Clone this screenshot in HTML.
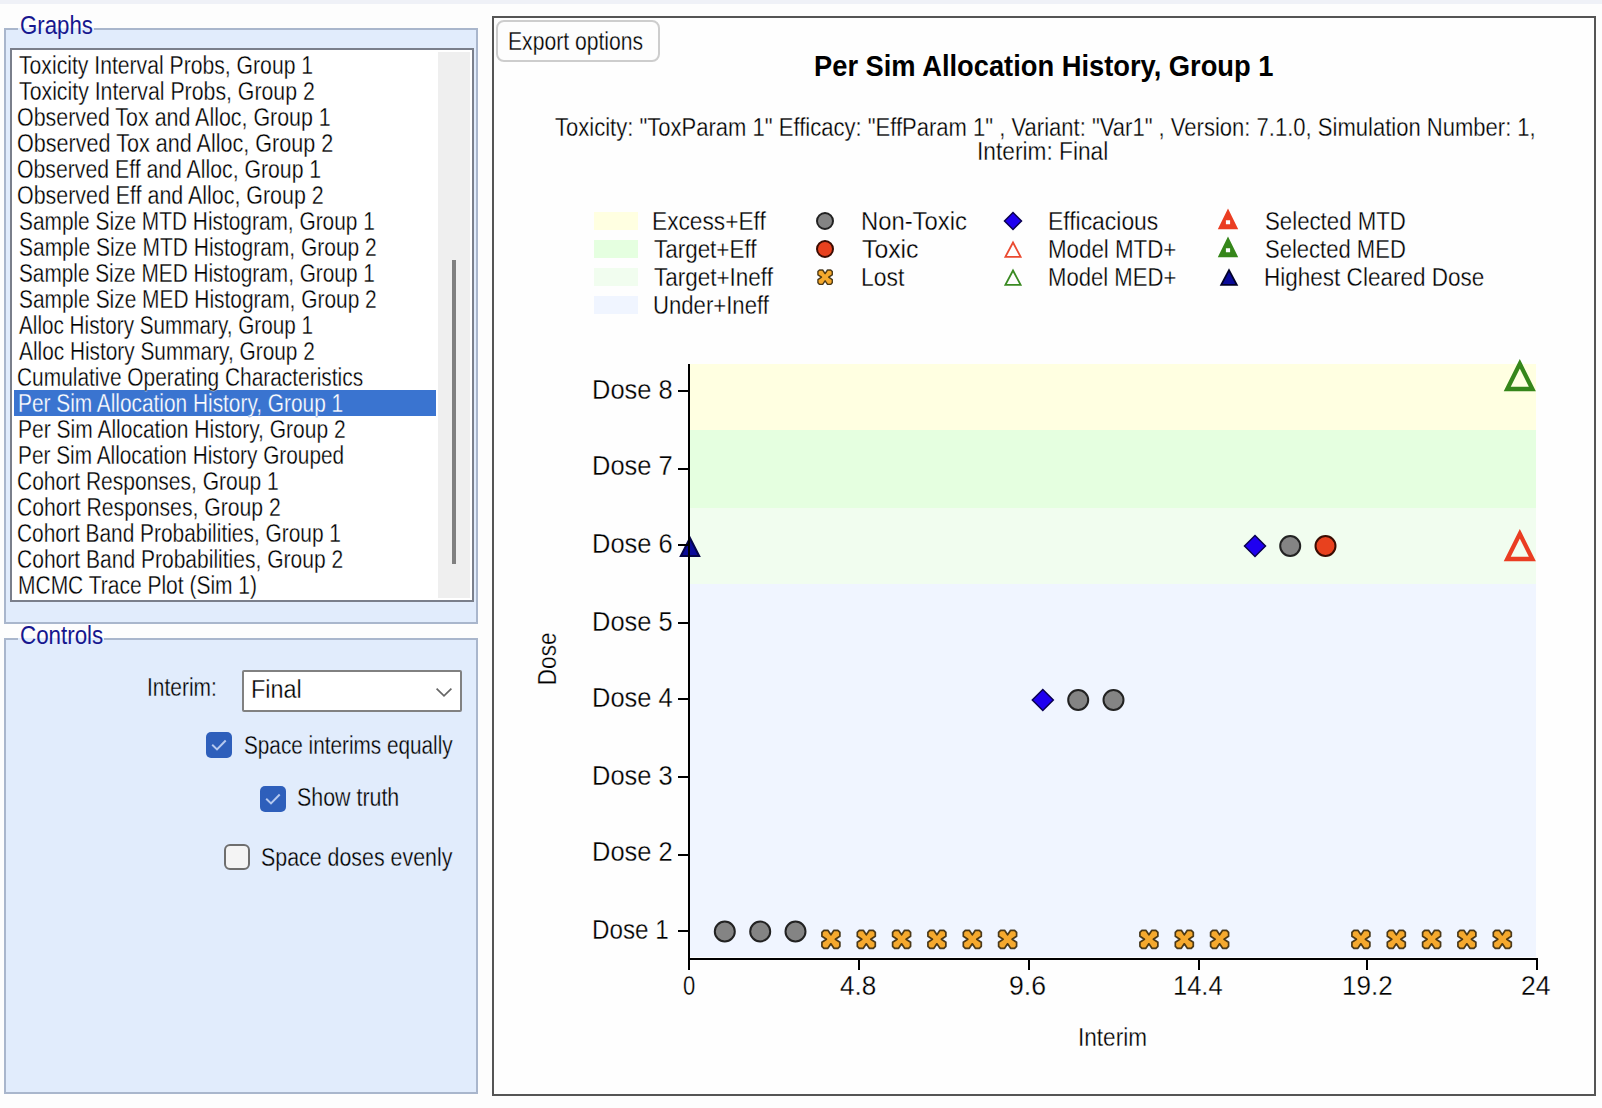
<!DOCTYPE html>
<html><head><meta charset="utf-8"><title>Per Sim Allocation History</title>
<style>
html,body{margin:0;padding:0;}
body{width:1602px;height:1108px;position:relative;overflow:hidden;background:#fdfdfd;font-family:"Liberation Sans",sans-serif;}
.a{position:absolute;box-sizing:border-box;}
.t{position:absolute;white-space:pre;line-height:1;transform-origin:0 0;font-family:"Liberation Sans",sans-serif;}
.strip{left:0;top:0;width:1602px;height:4px;background:#eff1f7;}
.grp{border:2px solid #a9b6cc;background:#e1ecfc;}
.gap{background:#e1ecfc;height:2px;}
.gapw{background:#fdfdfd;}
.list{left:10px;top:48px;width:464px;height:554px;border:2px solid #7a7f8b;background:#fff;}
.track{left:438px;top:52px;width:32px;height:546px;background:#efefef;}
.thumb{left:452px;top:260px;width:4px;height:304px;background:#808080;}
.sel{left:14px;top:390px;width:422px;height:26px;background:#3a74d0;}
.combo{left:242px;top:670px;width:220px;height:42px;border:2px solid #818181;border-radius:2px;background:#fff;}
.cb{width:26px;height:26px;border-radius:5px;background:#2e5fbb;}
.cbu{width:26px;height:26px;border-radius:6px;background:#f4f4f4;border:2px solid #6e6e6e;}
.panel{left:492px;top:16px;width:1104px;height:1080px;border:2px solid #555;background:#fefefe;}
.btn{left:496px;top:20px;width:164px;height:42px;border:2px solid #cdcdcd;border-radius:8px;background:#fdfdfd;}
svg{position:absolute;left:0;top:0;}

</style></head>
<body>
<div class="a strip"></div>

<!-- Graphs group -->
<div class="a grp" style="left:4px;top:28px;width:474px;height:596px;"></div>
<div class="a gapw" style="left:18px;top:12px;width:76px;height:16px;"></div>
<div class="a gap" style="left:18px;top:28px;width:76px;"></div>
<div class="a list"></div>
<div class="a track"></div>
<div class="a thumb"></div>
<div class="a sel"></div>

<!-- Controls group -->
<div class="a grp" style="left:4px;top:638px;width:474px;height:456px;"></div>
<div class="a gapw" style="left:18px;top:624px;width:86px;height:14px;"></div>
<div class="a gap" style="left:18px;top:638px;width:86px;"></div>
<div class="a combo"></div>
<div class="a cb" style="left:206px;top:732px;"></div>
<div class="a cb" style="left:260px;top:786px;"></div>
<div class="a cbu" style="left:224px;top:844px;"></div>

<!-- Chart panel -->
<div class="a panel"></div>
<div class="a btn"></div>

<svg width="1602" height="1108" viewBox="0 0 1602 1108">
<rect x="690" y="364" width="846" height="66" fill="#ffffe1"/>
<rect x="690" y="430" width="846" height="78" fill="#e5ffe0"/>
<rect x="690" y="508" width="846" height="76" fill="#f1fdef"/>
<rect x="690" y="584" width="846" height="373" fill="#f0f5ff"/>
<circle cx="724.8" cy="931.5" r="10.0" fill="#848484" stroke="#222" stroke-width="2"/>
<circle cx="760.2" cy="931.5" r="10.0" fill="#848484" stroke="#222" stroke-width="2"/>
<circle cx="795.5" cy="931.5" r="10.0" fill="#848484" stroke="#222" stroke-width="2"/>
<path d="M823.9 930.3 L827.9 930.3 L830.9 934.8 L833.9 930.3 L837.9 930.3 L839.9 932.3 L839.9 936.3 L835.4 939.3 L839.9 942.3 L839.9 946.3 L837.9 948.3 L833.9 948.3 L830.9 943.8 L827.9 948.3 L823.9 948.3 L821.9 946.3 L821.9 942.3 L826.4 939.3 L821.9 936.3 L821.9 932.3Z" fill="#f5a92e" stroke="#2e2004" stroke-width="1.7" stroke-linejoin="round" stroke-opacity="0.85"/>
<path d="M859.3 930.3 L863.3 930.3 L866.3 934.8 L869.3 930.3 L873.3 930.3 L875.3 932.3 L875.3 936.3 L870.8 939.3 L875.3 942.3 L875.3 946.3 L873.3 948.3 L869.3 948.3 L866.3 943.8 L863.3 948.3 L859.3 948.3 L857.3 946.3 L857.3 942.3 L861.8 939.3 L857.3 936.3 L857.3 932.3Z" fill="#f5a92e" stroke="#2e2004" stroke-width="1.7" stroke-linejoin="round" stroke-opacity="0.85"/>
<path d="M894.6 930.3 L898.6 930.3 L901.6 934.8 L904.6 930.3 L908.6 930.3 L910.6 932.3 L910.6 936.3 L906.1 939.3 L910.6 942.3 L910.6 946.3 L908.6 948.3 L904.6 948.3 L901.6 943.8 L898.6 948.3 L894.6 948.3 L892.6 946.3 L892.6 942.3 L897.1 939.3 L892.6 936.3 L892.6 932.3Z" fill="#f5a92e" stroke="#2e2004" stroke-width="1.7" stroke-linejoin="round" stroke-opacity="0.85"/>
<path d="M929.9 930.3 L933.9 930.3 L936.9 934.8 L939.9 930.3 L943.9 930.3 L945.9 932.3 L945.9 936.3 L941.4 939.3 L945.9 942.3 L945.9 946.3 L943.9 948.3 L939.9 948.3 L936.9 943.8 L933.9 948.3 L929.9 948.3 L927.9 946.3 L927.9 942.3 L932.4 939.3 L927.9 936.3 L927.9 932.3Z" fill="#f5a92e" stroke="#2e2004" stroke-width="1.7" stroke-linejoin="round" stroke-opacity="0.85"/>
<path d="M965.3 930.3 L969.3 930.3 L972.3 934.8 L975.3 930.3 L979.3 930.3 L981.3 932.3 L981.3 936.3 L976.8 939.3 L981.3 942.3 L981.3 946.3 L979.3 948.3 L975.3 948.3 L972.3 943.8 L969.3 948.3 L965.3 948.3 L963.3 946.3 L963.3 942.3 L967.8 939.3 L963.3 936.3 L963.3 932.3Z" fill="#f5a92e" stroke="#2e2004" stroke-width="1.7" stroke-linejoin="round" stroke-opacity="0.85"/>
<path d="M1000.6 930.3 L1004.6 930.3 L1007.6 934.8 L1010.6 930.3 L1014.6 930.3 L1016.6 932.3 L1016.6 936.3 L1012.1 939.3 L1016.6 942.3 L1016.6 946.3 L1014.6 948.3 L1010.6 948.3 L1007.6 943.8 L1004.6 948.3 L1000.6 948.3 L998.6 946.3 L998.6 942.3 L1003.1 939.3 L998.6 936.3 L998.6 932.3Z" fill="#f5a92e" stroke="#2e2004" stroke-width="1.7" stroke-linejoin="round" stroke-opacity="0.85"/>
<path d="M1141.9 930.3 L1145.9 930.3 L1148.9 934.8 L1151.9 930.3 L1155.9 930.3 L1157.9 932.3 L1157.9 936.3 L1153.4 939.3 L1157.9 942.3 L1157.9 946.3 L1155.9 948.3 L1151.9 948.3 L1148.9 943.8 L1145.9 948.3 L1141.9 948.3 L1139.9 946.3 L1139.9 942.3 L1144.4 939.3 L1139.9 936.3 L1139.9 932.3Z" fill="#f5a92e" stroke="#2e2004" stroke-width="1.7" stroke-linejoin="round" stroke-opacity="0.85"/>
<path d="M1177.3 930.3 L1181.3 930.3 L1184.3 934.8 L1187.3 930.3 L1191.3 930.3 L1193.3 932.3 L1193.3 936.3 L1188.8 939.3 L1193.3 942.3 L1193.3 946.3 L1191.3 948.3 L1187.3 948.3 L1184.3 943.8 L1181.3 948.3 L1177.3 948.3 L1175.3 946.3 L1175.3 942.3 L1179.8 939.3 L1175.3 936.3 L1175.3 932.3Z" fill="#f5a92e" stroke="#2e2004" stroke-width="1.7" stroke-linejoin="round" stroke-opacity="0.85"/>
<path d="M1212.6 930.3 L1216.6 930.3 L1219.6 934.8 L1222.6 930.3 L1226.6 930.3 L1228.6 932.3 L1228.6 936.3 L1224.1 939.3 L1228.6 942.3 L1228.6 946.3 L1226.6 948.3 L1222.6 948.3 L1219.6 943.8 L1216.6 948.3 L1212.6 948.3 L1210.6 946.3 L1210.6 942.3 L1215.1 939.3 L1210.6 936.3 L1210.6 932.3Z" fill="#f5a92e" stroke="#2e2004" stroke-width="1.7" stroke-linejoin="round" stroke-opacity="0.85"/>
<path d="M1353.9 930.3 L1357.9 930.3 L1360.9 934.8 L1363.9 930.3 L1367.9 930.3 L1369.9 932.3 L1369.9 936.3 L1365.4 939.3 L1369.9 942.3 L1369.9 946.3 L1367.9 948.3 L1363.9 948.3 L1360.9 943.8 L1357.9 948.3 L1353.9 948.3 L1351.9 946.3 L1351.9 942.3 L1356.4 939.3 L1351.9 936.3 L1351.9 932.3Z" fill="#f5a92e" stroke="#2e2004" stroke-width="1.7" stroke-linejoin="round" stroke-opacity="0.85"/>
<path d="M1389.3 930.3 L1393.3 930.3 L1396.3 934.8 L1399.3 930.3 L1403.3 930.3 L1405.3 932.3 L1405.3 936.3 L1400.8 939.3 L1405.3 942.3 L1405.3 946.3 L1403.3 948.3 L1399.3 948.3 L1396.3 943.8 L1393.3 948.3 L1389.3 948.3 L1387.3 946.3 L1387.3 942.3 L1391.8 939.3 L1387.3 936.3 L1387.3 932.3Z" fill="#f5a92e" stroke="#2e2004" stroke-width="1.7" stroke-linejoin="round" stroke-opacity="0.85"/>
<path d="M1424.6 930.3 L1428.6 930.3 L1431.6 934.8 L1434.6 930.3 L1438.6 930.3 L1440.6 932.3 L1440.6 936.3 L1436.1 939.3 L1440.6 942.3 L1440.6 946.3 L1438.6 948.3 L1434.6 948.3 L1431.6 943.8 L1428.6 948.3 L1424.6 948.3 L1422.6 946.3 L1422.6 942.3 L1427.1 939.3 L1422.6 936.3 L1422.6 932.3Z" fill="#f5a92e" stroke="#2e2004" stroke-width="1.7" stroke-linejoin="round" stroke-opacity="0.85"/>
<path d="M1459.9 930.3 L1463.9 930.3 L1466.9 934.8 L1469.9 930.3 L1473.9 930.3 L1475.9 932.3 L1475.9 936.3 L1471.4 939.3 L1475.9 942.3 L1475.9 946.3 L1473.9 948.3 L1469.9 948.3 L1466.9 943.8 L1463.9 948.3 L1459.9 948.3 L1457.9 946.3 L1457.9 942.3 L1462.4 939.3 L1457.9 936.3 L1457.9 932.3Z" fill="#f5a92e" stroke="#2e2004" stroke-width="1.7" stroke-linejoin="round" stroke-opacity="0.85"/>
<path d="M1495.3 930.3 L1499.3 930.3 L1502.3 934.8 L1505.3 930.3 L1509.3 930.3 L1511.3 932.3 L1511.3 936.3 L1506.8 939.3 L1511.3 942.3 L1511.3 946.3 L1509.3 948.3 L1505.3 948.3 L1502.3 943.8 L1499.3 948.3 L1495.3 948.3 L1493.3 946.3 L1493.3 942.3 L1497.8 939.3 L1493.3 936.3 L1493.3 932.3Z" fill="#f5a92e" stroke="#2e2004" stroke-width="1.7" stroke-linejoin="round" stroke-opacity="0.85"/>
<path d="M1042.8 689.5 L1053.3 700.0 L1042.8 710.5 L1032.3 700.0Z" fill="#1f00f0" stroke="#0a0050" stroke-width="1.5" stroke-linejoin="miter"/>
<circle cx="1078.2" cy="700.0" r="10.0" fill="#848484" stroke="#222" stroke-width="2"/>
<circle cx="1113.5" cy="700.0" r="10.0" fill="#848484" stroke="#222" stroke-width="2"/>
<path d="M1255.0 535.5 L1265.5 546.0 L1255.0 556.5 L1244.5 546.0Z" fill="#1f00f0" stroke="#0a0050" stroke-width="1.5" stroke-linejoin="miter"/>
<circle cx="1290.2" cy="546.0" r="10.0" fill="#848484" stroke="#222" stroke-width="2"/>
<circle cx="1325.5" cy="546.0" r="10.0" fill="#e8411e" stroke="#3a0c02" stroke-width="2"/>
<path d="M1519.8 363.8 L1532.4 389.0 L1507.2 389.0Z" fill="none" stroke="#35861a" stroke-width="4.3" stroke-linejoin="miter"/>
<path d="M1519.8 533.8 L1532.4 559.0 L1507.2 559.0Z" fill="none" stroke="#ea3d22" stroke-width="4.3" stroke-linejoin="miter"/>
<path d="M690.0 538.0 L699.2 556.0 L680.8 556.0Z" fill="#0b0b9a" stroke="#05054a" stroke-width="2" stroke-linejoin="miter"/>
<rect x="688" y="364" width="2" height="606" fill="#000"/>
<rect x="688" y="958" width="850" height="2" fill="#000"/>
<rect x="678" y="390" width="10" height="2" fill="#000"/>
<rect x="678" y="468" width="10" height="2" fill="#000"/>
<rect x="678" y="544" width="10" height="2" fill="#000"/>
<rect x="678" y="622" width="10" height="2" fill="#000"/>
<rect x="678" y="698" width="10" height="2" fill="#000"/>
<rect x="678" y="776" width="10" height="2" fill="#000"/>
<rect x="678" y="854" width="10" height="2" fill="#000"/>
<rect x="678" y="930" width="10" height="2" fill="#000"/>
<rect x="858" y="960" width="2" height="10" fill="#000"/>
<rect x="1028" y="960" width="2" height="10" fill="#000"/>
<rect x="1198" y="960" width="2" height="10" fill="#000"/>
<rect x="1366" y="960" width="2" height="10" fill="#000"/>
<rect x="1536" y="960" width="2" height="10" fill="#000"/>
<rect x="594" y="212" width="44" height="18" fill="#ffffe1"/>
<rect x="594" y="240" width="44" height="18" fill="#e5ffe0"/>
<rect x="594" y="268" width="44" height="18" fill="#f1fdef"/>
<rect x="594" y="296" width="44" height="18" fill="#f0f5ff"/>
<circle cx="825.0" cy="221.0" r="8.0" fill="#848484" stroke="#222" stroke-width="2"/>
<circle cx="825.0" cy="249.0" r="8.0" fill="#e8411e" stroke="#3a0c02" stroke-width="2"/>
<path d="M819.5 270.0 L822.7 270.0 L825.1 273.6 L827.5 270.0 L830.7 270.0 L832.3 271.6 L832.3 274.8 L828.7 277.2 L832.3 279.6 L832.3 282.8 L830.7 284.4 L827.5 284.4 L825.1 280.8 L822.7 284.4 L819.5 284.4 L817.9 282.8 L817.9 279.6 L821.5 277.2 L817.9 274.8 L817.9 271.6Z" fill="#f5a92e" stroke="#2e2004" stroke-width="1.4" stroke-linejoin="round" stroke-opacity="0.85"/>
<path d="M1013.0 212.5 L1021.5 221.0 L1013.0 229.5 L1004.5 221.0Z" fill="#1f00f0" stroke="#0a0050" stroke-width="1.5" stroke-linejoin="miter"/>
<path d="M1013.0 242.5 L1020.6 256.8 L1005.4 256.8Z" fill="none" stroke="#ea4a30" stroke-width="1.8" stroke-linejoin="miter"/>
<path d="M1013.0 270.5 L1020.6 284.8 L1005.4 284.8Z" fill="none" stroke="#3a8a22" stroke-width="1.8" stroke-linejoin="miter"/>
<path fill-rule="evenodd" d="M1228.0 208.4 L1238.2 229.2 L1217.8 229.2Z M1225.9 220.2 h4.2 v4 h-4.2Z" fill="#ea3d22"/>
<path fill-rule="evenodd" d="M1228.0 236.4 L1238.2 257.2 L1217.8 257.2Z M1225.9 248.2 h4.2 v4 h-4.2Z" fill="#35861a"/>
<path d="M1229.0 270.2 L1236.8 284.8 L1221.2 284.8Z" fill="#0b0b9a" stroke="#02022a" stroke-width="1.8" stroke-linejoin="miter"/>
<path d="M436.6 688.6 L444 695.8 L451.4 688.6" fill="none" stroke="#666" stroke-width="1.7"/>
<path d="M212.2 744.8 L217 749.4 L225.7 740.5" fill="none" stroke="#b6c9ef" stroke-width="2"/>
<path d="M266.2 798.8 L271 803.4 L279.7 794.5" fill="none" stroke="#b6c9ef" stroke-width="2"/>
</svg>

<span class="t" style="left:19.61px;top:12.83px;font-size:25px;color:#17178f;transform:scaleX(0.8884)">Graphs</span>
<span class="t" style="left:19.61px;top:622.83px;font-size:25px;color:#17178f;transform:scaleX(0.8942)">Controls</span>
<span class="t" style="left:18.70px;top:52.83px;font-size:25px;color:#000;-webkit-text-stroke:0.3px #fff;transform:scaleX(0.8466)">Toxicity Interval Probs, Group 1</span>
<span class="t" style="left:18.70px;top:78.83px;font-size:25px;color:#000;-webkit-text-stroke:0.3px #fff;transform:scaleX(0.8515)">Toxicity Interval Probs, Group 2</span>
<span class="t" style="left:16.94px;top:104.83px;font-size:25px;color:#000;-webkit-text-stroke:0.3px #fff;transform:scaleX(0.8563)">Observed Tox and Alloc, Group 1</span>
<span class="t" style="left:16.94px;top:130.83px;font-size:25px;color:#000;-webkit-text-stroke:0.3px #fff;transform:scaleX(0.8631)">Observed Tox and Alloc, Group 2</span>
<span class="t" style="left:16.95px;top:156.83px;font-size:25px;color:#000;-webkit-text-stroke:0.3px #fff;transform:scaleX(0.8494)">Observed Eff and Alloc, Group 1</span>
<span class="t" style="left:16.94px;top:182.83px;font-size:25px;color:#000;-webkit-text-stroke:0.3px #fff;transform:scaleX(0.8564)">Observed Eff and Alloc, Group 2</span>
<span class="t" style="left:18.57px;top:208.83px;font-size:25px;color:#000;-webkit-text-stroke:0.3px #fff;transform:scaleX(0.8342)">Sample Size MTD Histogram, Group 1</span>
<span class="t" style="left:18.56px;top:234.83px;font-size:25px;color:#000;-webkit-text-stroke:0.3px #fff;transform:scaleX(0.8386)">Sample Size MTD Histogram, Group 2</span>
<span class="t" style="left:18.57px;top:260.83px;font-size:25px;color:#000;-webkit-text-stroke:0.3px #fff;transform:scaleX(0.8314)">Sample Size MED Histogram, Group 1</span>
<span class="t" style="left:18.56px;top:286.83px;font-size:25px;color:#000;-webkit-text-stroke:0.3px #fff;transform:scaleX(0.8359)">Sample Size MED Histogram, Group 2</span>
<span class="t" style="left:18.70px;top:312.83px;font-size:25px;color:#000;-webkit-text-stroke:0.3px #fff;transform:scaleX(0.8279)">Alloc History Summary, Group 1</span>
<span class="t" style="left:18.70px;top:338.83px;font-size:25px;color:#000;-webkit-text-stroke:0.3px #fff;transform:scaleX(0.8327)">Alloc History Summary, Group 2</span>
<span class="t" style="left:16.96px;top:364.83px;font-size:25px;color:#000;-webkit-text-stroke:0.3px #fff;transform:scaleX(0.8360)">Cumulative Operating Characteristics</span>
<span class="t" style="left:17.73px;top:390.83px;font-size:25px;color:#fff;-webkit-text-stroke:0.3px #3a74d0;transform:scaleX(0.8338)">Per Sim Allocation History, Group 1</span>
<span class="t" style="left:17.72px;top:416.83px;font-size:25px;color:#000;-webkit-text-stroke:0.3px #fff;transform:scaleX(0.8403)">Per Sim Allocation History, Group 2</span>
<span class="t" style="left:17.74px;top:442.83px;font-size:25px;color:#000;-webkit-text-stroke:0.3px #fff;transform:scaleX(0.8324)">Per Sim Allocation History Grouped</span>
<span class="t" style="left:16.96px;top:468.83px;font-size:25px;color:#000;-webkit-text-stroke:0.3px #fff;transform:scaleX(0.8404)">Cohort Responses, Group 1</span>
<span class="t" style="left:16.95px;top:494.83px;font-size:25px;color:#000;-webkit-text-stroke:0.3px #fff;transform:scaleX(0.8475)">Cohort Responses, Group 2</span>
<span class="t" style="left:16.96px;top:520.83px;font-size:25px;color:#000;-webkit-text-stroke:0.3px #fff;transform:scaleX(0.8356)">Cohort Band Probabilities, Group 1</span>
<span class="t" style="left:16.96px;top:546.83px;font-size:25px;color:#000;-webkit-text-stroke:0.3px #fff;transform:scaleX(0.8413)">Cohort Band Probabilities, Group 2</span>
<span class="t" style="left:17.72px;top:572.83px;font-size:25px;color:#000;-webkit-text-stroke:0.3px #fff;transform:scaleX(0.8394)">MCMC Trace Plot (Sim 1)</span>
<span class="t" style="left:146.92px;top:674.83px;font-size:25px;color:#000;-webkit-text-stroke:0.3px #e1ecfc;transform:scaleX(0.8388)">Interim:</span>
<span class="t" style="left:251.13px;top:676.83px;font-size:25px;color:#000;-webkit-text-stroke:0.3px #fff;transform:scaleX(0.9362)">Final</span>
<span class="t" style="left:243.87px;top:732.83px;font-size:25px;color:#000;-webkit-text-stroke:0.3px #e1ecfc;transform:scaleX(0.8298)">Space interims equally</span>
<span class="t" style="left:297.14px;top:784.83px;font-size:25px;color:#000;-webkit-text-stroke:0.3px #e1ecfc;transform:scaleX(0.8554)">Show truth</span>
<span class="t" style="left:261.34px;top:844.83px;font-size:25px;color:#000;-webkit-text-stroke:0.3px #e1ecfc;transform:scaleX(0.8555)">Space doses evenly</span>
<span class="t" style="left:508.31px;top:28.83px;font-size:25px;color:#000;-webkit-text-stroke:0.3px #fefefe;transform:scaleX(0.8454)">Export options</span>
<span class="t" style="left:813.66px;top:52.25px;font-size:29px;color:#000;font-weight:700;transform:scaleX(0.9410)">Per Sim Allocation History, Group 1</span>
<span class="t" style="left:555.00px;top:114.83px;font-size:25px;color:#000;-webkit-text-stroke:0.3px #fefefe;transform:scaleX(0.8812)">Toxicity: &quot;ToxParam 1&quot; Efficacy: &quot;EffParam 1&quot; , Variant: &quot;Var1&quot; , Version: 7.1.0, Simulation Number: 1,</span>
<span class="t" style="left:977.18px;top:138.83px;font-size:25px;color:#000;-webkit-text-stroke:0.3px #fefefe;transform:scaleX(0.9083)">Interim: Final</span>
<span class="t" style="left:652.18px;top:208.83px;font-size:25px;color:#000;-webkit-text-stroke:0.3px #fefefe;transform:scaleX(0.9080)">Excess+Eff</span>
<span class="t" style="left:654.00px;top:236.83px;font-size:25px;color:#000;-webkit-text-stroke:0.3px #fefefe;transform:scaleX(0.8971)">Target+Eff</span>
<span class="t" style="left:654.00px;top:264.83px;font-size:25px;color:#000;-webkit-text-stroke:0.3px #fefefe;transform:scaleX(0.8993)">Target+Ineff</span>
<span class="t" style="left:653.11px;top:292.83px;font-size:25px;color:#000;-webkit-text-stroke:0.3px #fefefe;transform:scaleX(0.8850)">Under+Ineff</span>
<span class="t" style="left:860.59px;top:208.83px;font-size:25px;color:#000;-webkit-text-stroke:0.3px #fefefe;transform:scaleX(0.9526)">Non-Toxic</span>
<span class="t" style="left:862.00px;top:236.83px;font-size:25px;color:#000;-webkit-text-stroke:0.3px #fefefe;transform:scaleX(0.9919)">Toxic</span>
<span class="t" style="left:860.67px;top:264.83px;font-size:25px;color:#000;-webkit-text-stroke:0.3px #fefefe;transform:scaleX(0.9160)">Lost</span>
<span class="t" style="left:1048.17px;top:208.83px;font-size:25px;color:#000;-webkit-text-stroke:0.3px #fefefe;transform:scaleX(0.9158)">Efficacious</span>
<span class="t" style="left:1048.22px;top:236.83px;font-size:25px;color:#000;-webkit-text-stroke:0.3px #fefefe;transform:scaleX(0.8924)">Model MTD+</span>
<span class="t" style="left:1048.23px;top:264.83px;font-size:25px;color:#000;-webkit-text-stroke:0.3px #fefefe;transform:scaleX(0.8836)">Model MED+</span>
<span class="t" style="left:1265.11px;top:208.83px;font-size:25px;color:#000;-webkit-text-stroke:0.3px #fefefe;transform:scaleX(0.8891)">Selected MTD</span>
<span class="t" style="left:1265.12px;top:236.83px;font-size:25px;color:#000;-webkit-text-stroke:0.3px #fefefe;transform:scaleX(0.8812)">Selected MED</span>
<span class="t" style="left:1264.20px;top:264.83px;font-size:25px;color:#000;-webkit-text-stroke:0.3px #fefefe;transform:scaleX(0.9008)">Highest Cleared Dose</span>
<span class="t" style="left:591.88px;top:376.29px;font-size:28px;color:#000;-webkit-text-stroke:0.3px #fefefe;transform:scaleX(0.9089)">Dose 8</span>
<span class="t" style="left:591.88px;top:452.29px;font-size:28px;color:#000;-webkit-text-stroke:0.3px #fefefe;transform:scaleX(0.9089)">Dose 7</span>
<span class="t" style="left:591.88px;top:530.29px;font-size:28px;color:#000;-webkit-text-stroke:0.3px #fefefe;transform:scaleX(0.9089)">Dose 6</span>
<span class="t" style="left:591.88px;top:608.29px;font-size:28px;color:#000;-webkit-text-stroke:0.3px #fefefe;transform:scaleX(0.9089)">Dose 5</span>
<span class="t" style="left:591.88px;top:684.29px;font-size:28px;color:#000;-webkit-text-stroke:0.3px #fefefe;transform:scaleX(0.9089)">Dose 4</span>
<span class="t" style="left:591.88px;top:762.29px;font-size:28px;color:#000;-webkit-text-stroke:0.3px #fefefe;transform:scaleX(0.9089)">Dose 3</span>
<span class="t" style="left:591.88px;top:838.29px;font-size:28px;color:#000;-webkit-text-stroke:0.3px #fefefe;transform:scaleX(0.9089)">Dose 2</span>
<span class="t" style="left:591.97px;top:916.29px;font-size:28px;color:#000;-webkit-text-stroke:0.3px #fefefe;transform:scaleX(0.8648)">Dose 1</span>
<span class="t" style="left:683.21px;top:972.29px;font-size:28px;color:#000;-webkit-text-stroke:0.3px #fefefe;transform:scaleX(0.7857)">0</span>
<span class="t" style="left:840.00px;top:972.29px;font-size:28px;color:#000;-webkit-text-stroke:0.3px #fefefe;transform:scaleX(0.9309)">4.8</span>
<span class="t" style="left:1009.05px;top:972.29px;font-size:28px;color:#000;-webkit-text-stroke:0.3px #fefefe;transform:scaleX(0.9504)">9.6</span>
<span class="t" style="left:1172.68px;top:972.29px;font-size:28px;color:#000;-webkit-text-stroke:0.3px #fefefe;transform:scaleX(0.9109)">14.4</span>
<span class="t" style="left:1342.14px;top:972.29px;font-size:28px;color:#000;-webkit-text-stroke:0.3px #fefefe;transform:scaleX(0.9302)">19.2</span>
<span class="t" style="left:1521.05px;top:972.29px;font-size:28px;color:#000;-webkit-text-stroke:0.3px #fefefe;transform:scaleX(0.9468)">24</span>
<span class="t" style="left:1077.60px;top:1024.83px;font-size:25px;color:#000;-webkit-text-stroke:0.3px #fefefe;transform:scaleX(0.9024)">Interim</span>
<span class="t" style="left:556.00px;top:664.14px;font-size:25px;color:#000;-webkit-text-stroke:0.3px #fefefe;transform-origin:0 21.17px;transform:rotate(-90deg) scaleX(0.9016)">Dose</span>

</body></html>
